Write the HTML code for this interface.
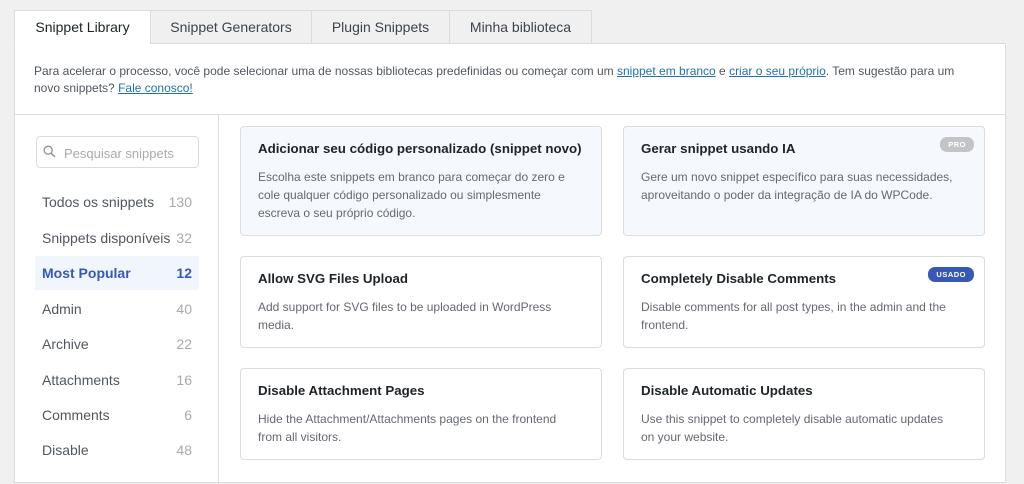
<!DOCTYPE html>
<html><head><meta charset="utf-8"><style>
*{box-sizing:border-box;margin:0;padding:0}
body{width:1024px;height:473px;overflow:hidden;background:#f0f0f1;font-family:"Liberation Sans",sans-serif;position:relative;color:#3c434a}
.abs{position:absolute}
.tab{position:absolute;top:10px;height:34px;border:1px solid #dcdcde;background:#f0f0f1;font-size:14px;color:#3c434a;text-align:center;line-height:33px}
.panel{left:14px;top:43px;width:992px;height:440px;background:#fff;border:1px solid #dcdcde}
.info{left:14px;top:43px;width:992px;height:72px;border-bottom:1px solid #dcdcde;padding:20px 10px 0 20px;font-size:12px;line-height:17px;color:#50575e;white-space:nowrap}
.info a{color:#2271b1;text-decoration:underline}
.side{left:14px;top:114px;width:205px;height:370px;border-right:1px solid #dcdcde}
.search{left:36px;top:136px;width:163px;height:32px;border:1px solid #dcdcde;border-radius:4px;font-size:13px;color:#a7aaad;padding:9px 0 0 27px}
.item{position:absolute;left:35px;width:164px;height:34px;font-size:14px;color:#50575e;padding:0 7px;line-height:34px}
.item span{float:right;color:#a7aaad}
.item.act{background:#f0f6fc;color:#3858b8;font-weight:bold}
.item.act span{color:#3858b8}
.card{position:absolute;width:362px;border:1px solid #dcdcde;border-radius:4px;background:#fff;padding:14px 28px 14px 17px}
.card.hl{background:#f5f8fd}
.card h3{font-size:13.3px;font-weight:bold;color:#1d2327;margin-bottom:12px;white-space:nowrap}
.card p{font-size:12px;line-height:18px;color:#646970}
.badge{position:absolute;right:10px;top:10px;font-size:7.5px;font-weight:bold;color:#fff;border-radius:7px;padding:3px 8px;letter-spacing:.5px}
</style></head><body>
<div class="abs panel"></div>
<div class="tab" style="left:14px;width:137px;background:#fff;border-bottom-color:#fff;color:#1d2327">Snippet Library</div>
<div class="tab" style="left:150px;width:162px">Snippet Generators</div>
<div class="tab" style="left:311px;width:139px">Plugin Snippets</div>
<div class="tab" style="left:449px;width:143px">Minha biblioteca</div>
<div class="abs info">Para acelerar o processo, você pode selecionar uma de nossas bibliotecas predefinidas ou começar com um <a>snippet em branco</a> e <a>criar o seu próprio</a>. Tem sugestão para um<br>novo snippets? <a>Fale conosco!</a></div>
<div class="abs side"></div>
<div class="abs search">Pesquisar snippets</div>
<svg class="abs" style="left:43px;top:145px" width="13" height="13" viewBox="0 0 13 13"><circle cx="5.2" cy="5.2" r="4" fill="none" stroke="#8c8f94" stroke-width="1.3"/><line x1="8.2" y1="8.2" x2="12" y2="12" stroke="#8c8f94" stroke-width="1.4"/></svg>
<div class="item" style="top:185px">Todos os snippets<span>130</span></div>
<div class="item" style="top:221px">Snippets disponíveis<span>32</span></div>
<div class="item act" style="top:256px">Most Popular<span>12</span></div>
<div class="item" style="top:292px">Admin<span>40</span></div>
<div class="item" style="top:327px">Archive<span>22</span></div>
<div class="item" style="top:363px">Attachments<span>16</span></div>
<div class="item" style="top:398px">Comments<span>6</span></div>
<div class="item" style="top:433px">Disable<span>48</span></div>

<div class="card hl" style="left:240px;top:126px;height:110px"><h3>Adicionar seu código personalizado (snippet novo)</h3><p>Escolha este snippets em branco para começar do zero e cole qualquer código personalizado ou simplesmente escreva o seu próprio código.</p></div>
<div class="card hl" style="left:623px;top:126px;height:110px"><h3>Gerar snippet usando IA</h3><p>Gere um novo snippet específico para suas necessidades, aproveitando o poder da integração de IA do WPCode.</p><div class="badge" style="background:#c3c4c7">PRO</div></div>
<div class="card" style="left:240px;top:256px;height:92px"><h3>Allow SVG Files Upload</h3><p>Add support for SVG files to be uploaded in WordPress media.</p></div>
<div class="card" style="left:623px;top:256px;height:92px"><h3>Completely Disable Comments</h3><p>Disable comments for all post types, in the admin and the frontend.</p><div class="badge" style="background:#3858b8">USADO</div></div>
<div class="card" style="left:240px;top:368px;height:92px"><h3>Disable Attachment Pages</h3><p>Hide the Attachment/Attachments pages on the frontend<br>from all visitors.</p></div>
<div class="card" style="left:623px;top:368px;height:92px"><h3>Disable Automatic Updates</h3><p>Use this snippet to completely disable automatic updates<br>on your website.</p></div>
</body></html>
